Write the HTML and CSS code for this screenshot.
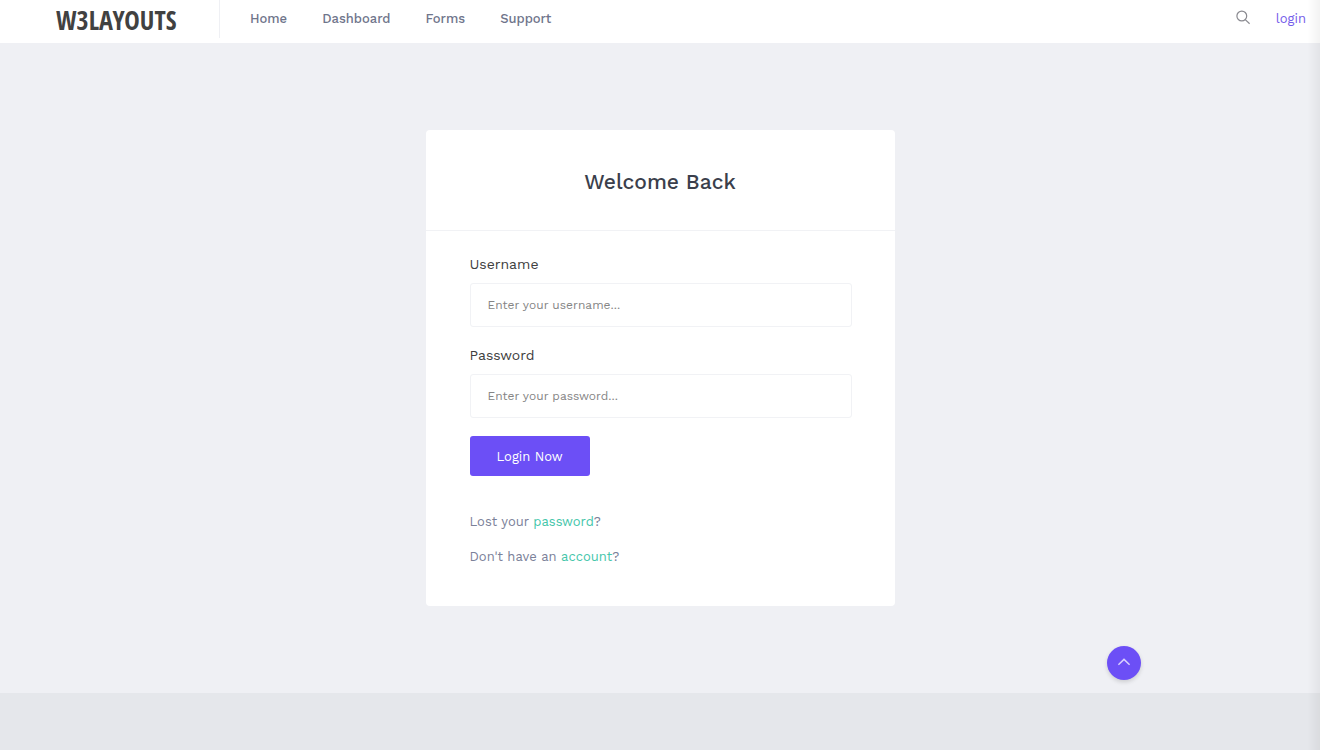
FILE: index.html
```html
<!DOCTYPE html>
<html lang="en">
<head>
    <meta charset="UTF-8">
    <meta name="viewport" content="width=device-width, initial-scale=1.0">
    <title>W3Layouts - Login</title>
    <link rel="stylesheet" href="styles.css">
</head>
<body>
    <header class="header">
        <a href="#" class="logo">W3LAYOUTS</a>
        <nav class="nav">
            <a href="#">Home</a>
            <a href="#">Dashboard</a>
            <a href="#">Forms</a>
            <a href="#">Support</a>
        </nav>
        <div class="header-right">
            <button type="button" class="search-btn" aria-label="Search">
                <svg width="16" height="16" viewBox="0 0 16 16" fill="none" stroke="currentColor" stroke-width="1.2">
                    <circle cx="6.8" cy="7" r="4.9"/>
                    <path d="M10.3 10.6L14.6 14.7"/>
                </svg>
            </button>
            <a href="#" class="login-link">login</a>
        </div>
    </header>

    <main class="main">
        <div class="card">
            <div class="card-header">
                <h1>Welcome Back</h1>
            </div>
            <div class="card-body">
                <form>
                    <div class="form-group">
                        <label for="username">Username</label>
                        <input type="text" id="username" placeholder="Enter your username...">
                    </div>
                    <div class="form-group">
                        <label for="password">Password</label>
                        <input type="password" id="password" placeholder="Enter your password...">
                    </div>
                    <button type="submit" class="btn">Login Now</button>
                </form>
                <div class="card-links">
                    <p>Lost your <a href="#">password</a>?</p>
                    <p>Don't have an <a href="#">account</a>?</p>
                </div>
            </div>
        </div>
    </main>

    <footer class="footer"></footer>

    <a href="#" class="back-to-top" aria-label="Back to top">
        <svg width="14" height="14" viewBox="0 0 14 14" fill="none" stroke="currentColor" stroke-width="1.5">
            <path d="M1.4 8.8L7 3.4L12.6 8.8"/>
        </svg>
    </a>
    <!-- Shadow of the closed side panel -->
    <div class="panel-shadow"></div>
</body>
</html>
```
FILE: styles.css
```css
* {
    box-sizing: border-box;
}
body {
    display: flex;
    flex-direction: column;
    min-height: 100vh;
    margin: 0;
    font-family: "Work Sans", Inter, sans-serif;
    font-size: 13px;
    line-height: 20px;
    color: #7b8199;
    background: #eff0f4;
}
a {
    text-decoration: none;
}
.header {
    display: flex;
    align-items: flex-start;
    height: 43px;
    padding: 0 14px 0 56px;
    background: #fff;
}
.logo {
    width: 164px;
    height: 38px;
    border-right: 1px solid #eff0f4;
    font-family: "Liberation Sans Narrow", "Open Sans Condensed", "Liberation Sans", sans-serif;
    font-size: 26px;
    font-weight: bold;
    line-height: 40px;
    color: #414141;
}
.nav {
    display: flex;
    gap: 35px;
    padding: 9px 0 0 30px;
}
.nav a {
    font-weight: 500;
    color: #6f758b;
}
.header-right {
    display: flex;
    gap: 25px;
    margin-left: auto;
    padding-top: 9px;
}
.search-btn {
    width: 16px;
    height: 16px;
    padding: 0;
    border: 0;
    background: none;
    color: #8a8a90;
}
.search-btn svg {
    display: block;
}
.login-link {
    color: #755cea;
}
.main {
    padding: 87px 20px;
}
.card {
    max-width: 469px;
    margin: 0 auto;
    border-radius: 4px;
    background: #fff;
}
.card-header {
    padding: 38px 44px 34px;
    border-bottom: 1px solid #f1f2f5;
}
.card-header h1 {
    margin: 0;
    font-size: 21px;
    font-weight: 500;
    line-height: 28px;
    text-align: center;
    color: #3b3f4c;
}
.card-body {
    padding: 23px 43px 39px 44px;
}
.form-group {
    margin-bottom: 18px;
}
.form-group label {
    display: block;
    margin-bottom: 9px;
    font-size: 14px;
    color: #404040;
}
.form-group input {
    display: block;
    width: 100%;
    height: 44px;
    padding: 0 17px;
    border: 1px solid #f1f2f5;
    border-radius: 3px;
    font-family: inherit;
    font-size: 12px;
    color: #404040;
    background: #fff;
}
.form-group input::placeholder {
    color: #858585;
}
.btn {
    display: block;
    height: 40px;
    padding: 0 27px;
    border: 0;
    border-radius: 3px;
    font-family: inherit;
    font-size: 13px;
    color: #fff;
    background: #6c4ff6;
}
.card-links {
    display: flex;
    flex-direction: column;
    gap: 15px;
    margin-top: 36px;
}
.card-links p {
    margin: 0;
}
.card-links a {
    color: #45c6aa;
}
.footer {
    flex: 1;
    min-height: 57px;
    background: #e5e7eb;
}
.back-to-top {
    position: fixed;
    right: 179px;
    bottom: 70px;
    display: flex;
    align-items: center;
    justify-content: center;
    width: 34px;
    height: 34px;
    border-radius: 50%;
    color: #d9d0fd;
    background: #6c4ff6;
    box-shadow: 0 2px 4px rgba(0, 0, 0, 0.15);
}
.panel-shadow {
    position: fixed;
    top: 0;
    right: 0;
    bottom: 0;
    width: 12px;
    background: linear-gradient(to right, rgba(0, 0, 0, 0), rgba(0, 0, 0, 0.05));
    pointer-events: none;
}
```
